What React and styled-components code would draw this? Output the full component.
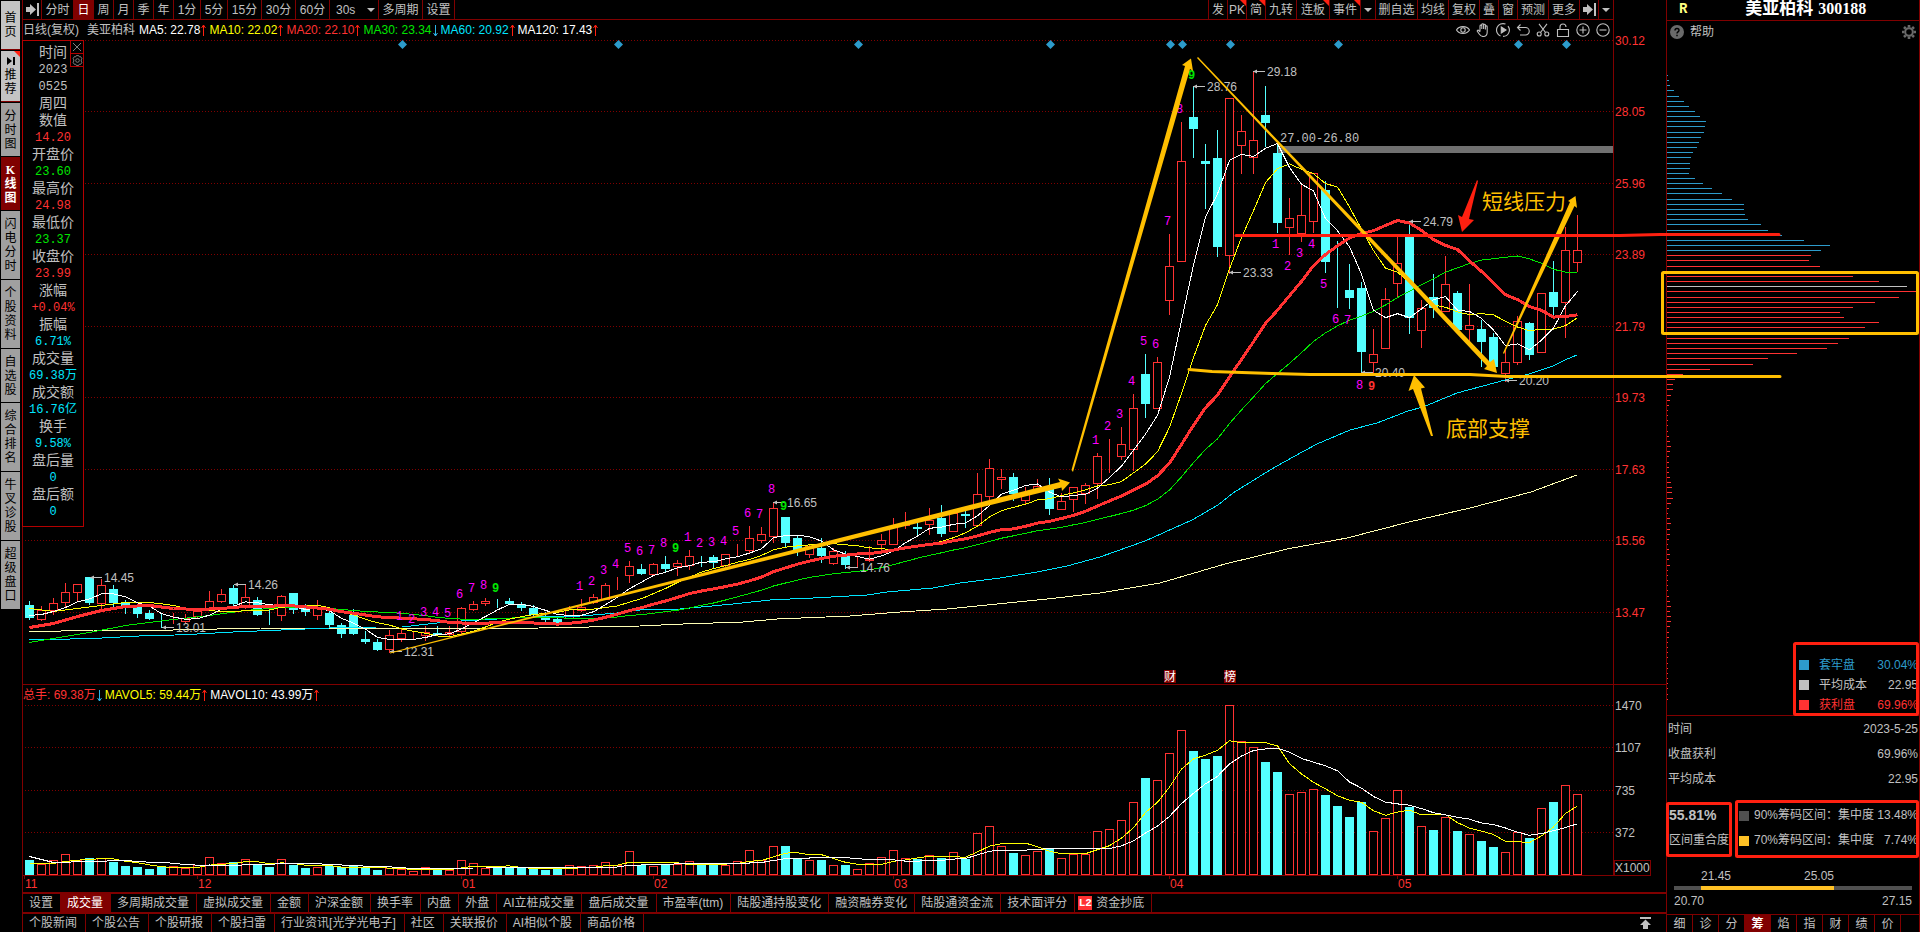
import React from "react";
import styled, { createGlobalStyle, css } from "styled-components";

const C = {
  line: "#800000",
  frame: "#b40000",
  text: "#c0c0c0",
  red: "#ff3232",
  green: "#00e600",
  cyan: "#54ffff",
  aqua: "#00e6ff",
  yellow: "#ffff00",
  blue: "#2d9bcb",
  gold: "#ffbf00",
  mark: "#ff2010",
};

const SANS = `"Liberation Sans", "Noto Sans CJK SC", sans-serif`;
const MONO = `"Liberation Mono", "Noto Sans CJK SC", monospace`;
const SERIF = `"Liberation Serif", "Noto Sans CJK SC", serif`;

const GlobalStyle = createGlobalStyle`
  * { box-sizing: border-box; }
  body {
    margin: 0;
    background: #000;
    color: ${C.text};
    font: 12px/14px ${SANS};
  }
  button, select {
    font: inherit;
    color: inherit;
    background: none;
    border: 0;
    padding: 0;
    margin: 0;
    white-space: nowrap;
  }
  svg { display: block; }
`;

/* ---------- data ---------- */

// high, body top, body bottom, low, volume top, 1 = rising
const CANDLES = [
  [601, 605, 618, 619, 860, 0], [606, 610, 619, 620, 864, 1], [598, 603, 610, 614, 860, 1],
  [583, 592, 602, 606, 854, 1], [584, 584, 592, 601, 860, 1], [577, 577, 603, 604, 858, 0],
  [579, 585, 603, 608, 858, 1], [585, 589, 603, 606, 862, 0], [600, 602, 607, 613, 866, 0],
  [604, 607, 614, 617, 867, 0], [610, 613, 619, 619, 869, 0], [614, 623, 623, 627, 867, 0],
  [613, 620, 620, 623, 866, 1], [614, 618, 621, 622, 868, 1], [609, 611, 616, 617, 865, 1],
  [591, 601, 609, 610, 857, 1], [589, 594, 601, 602, 863, 1], [585, 588, 604, 605, 862, 0],
  [585, 597, 607, 608, 859, 1], [597, 600, 615, 615, 865, 0], [605, 612, 612, 624, 867, 0],
  [595, 596, 615, 620, 859, 1], [593, 593, 610, 613, 865, 0], [604, 608, 612, 615, 868, 0],
  [600, 608, 615, 619, 867, 1], [611, 613, 625, 626, 866, 0], [623, 625, 634, 637, 867, 0],
  [609, 615, 634, 634, 865, 0], [631, 639, 642, 643, 868, 0], [639, 642, 650, 650, 870, 0],
  [630, 635, 649, 652, 868, 1], [629, 633, 638, 641, 869, 1], [632, 635, 635, 638, 871, 1],
  [626, 632, 635, 640, 867, 1], [626, 633, 635, 635, 869, 0], [626, 632, 634, 636, 870, 1],
  [607, 608, 631, 633, 860, 1], [601, 604, 609, 610, 863, 1], [598, 601, 603, 605, 868, 1],
  [599, 602, 602, 607, 868, 0], [598, 601, 604, 604, 868, 0], [602, 604, 608, 610, 868, 0],
  [605, 608, 615, 616, 868, 0], [612, 617, 620, 622, 870, 0], [617, 619, 623, 624, 868, 0],
  [606, 609, 618, 618, 865, 1], [599, 607, 610, 611, 866, 1], [594, 597, 602, 603, 865, 1],
  [583, 585, 599, 599, 862, 1], [577, 586, 586, 589, 865, 1], [561, 566, 575, 582, 851, 1],
  [564, 569, 574, 574, 865, 0], [563, 564, 574, 574, 866, 1], [556, 564, 569, 571, 865, 0],
  [560, 563, 566, 575, 864, 1], [550, 556, 565, 569, 861, 1], [556, 556, 556, 566, 864, 0],
  [555, 557, 563, 568, 864, 0], [554, 554, 565, 566, 865, 1], [544, 552, 552, 556, 861, 1],
  [526, 538, 550, 553, 850, 1], [527, 534, 540, 542, 860, 1], [503, 508, 536, 542, 846, 1],
  [517, 517, 543, 547, 846, 0], [536, 538, 550, 555, 859, 0], [545, 546, 554, 557, 860, 1],
  [538, 548, 556, 562, 860, 0], [548, 551, 563, 564, 865, 1], [551, 556, 565, 568, 865, 0],
  [557, 562, 562, 566, 869, 1], [546, 559, 560, 561, 863, 1], [534, 540, 544, 551, 857, 1],
  [518, 527, 544, 544, 850, 1], [512, 523, 525, 528, 858, 1], [523, 527, 529, 536, 859, 0],
  [508, 520, 524, 534, 855, 1], [505, 518, 534, 536, 858, 0], [512, 513, 531, 531, 852, 1],
  [510, 514, 516, 527, 859, 0], [473, 494, 525, 525, 833, 1], [459, 468, 496, 500, 826, 1],
  [469, 477, 479, 488, 846, 1], [473, 477, 494, 500, 853, 0], [487, 492, 500, 503, 855, 1],
  [479, 486, 490, 492, 851, 1], [478, 489, 509, 514, 849, 0], [493, 501, 509, 509, 858, 1],
  [487, 487, 499, 511, 854, 1], [483, 485, 493, 503, 854, 1], [453, 456, 483, 498, 831, 1],
  [439, 456, 456, 472, 829, 1], [427, 444, 456, 459, 820, 1], [394, 408, 449, 470, 802, 1],
  [354, 374, 404, 417, 778, 0], [357, 362, 408, 408, 780, 1], [234, 266, 300, 314, 753, 1],
  [122, 161, 261, 261, 730, 1], [86, 117, 129, 157, 751, 0], [144, 161, 164, 208, 759, 0],
  [130, 158, 247, 256, 756, 0], [98, 98, 255, 273, 705, 1], [115, 131, 145, 173, 741, 1],
  [71, 140, 157, 173, 747, 1], [86, 115, 123, 146, 762, 0], [145, 153, 223, 232, 772, 0],
  [198, 218, 227, 254, 794, 1], [185, 215, 233, 241, 792, 1], [173, 173, 221, 232, 789, 1],
  [181, 190, 262, 272, 795, 0], [241, 283, 283, 307, 806, 0], [264, 290, 298, 308, 817, 0],
  [282, 288, 352, 373, 802, 0], [329, 354, 362, 373, 831, 1], [288, 299, 348, 348, 818, 1],
  [237, 263, 283, 297, 790, 1], [225, 237, 318, 333, 807, 0], [300, 308, 330, 347, 826, 1],
  [274, 297, 308, 317, 830, 0], [256, 284, 311, 311, 817, 1], [291, 293, 330, 330, 831, 0],
  [284, 325, 329, 340, 834, 1], [320, 329, 342, 366, 841, 0], [333, 337, 367, 367, 847, 0],
  [350, 362, 373, 381, 852, 1], [316, 321, 362, 364, 832, 1], [322, 323, 355, 359, 838, 0],
  [293, 293, 352, 352, 808, 1], [261, 292, 307, 314, 802, 0], [227, 250, 302, 337, 785, 1],
  [215, 250, 262, 271, 794, 1],
];

const cx = (i) => 29 + 12 * i;
const VOL_BASE = 875;

// moving average over candles; `head` covers the days before the period fills up
function average(values, period, head) {
  const out = head.map(([i, y]) => [cx(i), y]);
  for (let i = period - 1; i < values.length; i += 1) {
    let sum = 0;
    for (let k = 0; k < period; k += 1) sum += values[i - k];
    out.push([cx(i), Math.round((sum / period) * 10) / 10]);
  }
  return out.map(([x, y]) => `${x + 0.5},${y + 0.5}`).join(" ");
}

const closes = CANDLES.map((c) => (c[5] ? c[1] : c[2]));
const volumes = CANDLES.map((c) => c[4]);

const MA5 = average(closes, 5, [[0, 615], [1, 614], [2, 611], [3, 607]]);
const MA10 = average(closes, 10, [[0, 608], [2, 611], [4, 608], [6, 605], [8, 602]]);
const MA20 = average(closes, 20, [
  [0, 627], [2, 623], [4, 616], [6, 610], [8, 606], [10, 605], [12, 608], [14, 609], [16, 608], [18, 606],
]);
const MA30 = average(closes, 30, [
  [0, 642], [2, 638], [5, 632], [8, 625], [12, 619], [15, 615], [18, 610], [21, 607], [24, 607], [26, 609], [28, 611],
]);
const MA60 =
  "29,639 70,639 102,638 139,636 175,635 197,634 233,632 281,630 329,628 377,627 402,627 437,623 461,621 497,619 533,617 581,616 617,613 640,610 680,609 733,604 770,600 790,599 813,598 867,595 887,592 933,588 960,583 1000,578 1037,572 1067,566 1100,557 1145,541 1192,520 1218,505 1233,493 1270,470 1293,457 1317,444 1350,430 1377,423 1408,411 1423,407 1457,393 1483,386 1505,380 1529,374 1553,366 1565,360 1577,355";
const MA120 =
  "29,632 94,630 173,630 261,628 353,628 465,629 539,628 640,626 683,624 743,622 777,619 850,616 900,612 947,609 1007,603 1047,599 1100,593 1160,583 1225,564 1287,549 1347,538 1409,522 1470,508 1531,492 1577,475";

const VMA5 = average(volumes, 5, [[0, 863], [2, 863], [3, 861]]);
const VMA10 = average(volumes, 10, [[0, 856], [2, 862], [5, 861], [8, 860]]);

const PRICES = [
  ["30.12", 40], ["28.05", 111], ["25.96", 183], ["23.89", 254], ["21.79", 326],
  ["19.73", 397], ["17.63", 469], ["15.56", 540], ["13.47", 612],
];
const VOLUMES = [["1470", 705], ["1107", 747], ["735", 790], ["372", 832]];
const MONTHS = [["11", 24], ["12", 197], ["01", 461], ["02", 653], ["03", 893], ["04", 1169], ["05", 1397]];
const DIAMONDS = [402, 618, 858, 1050, 1170, 1182, 1230, 1338, 1518, 1566];

const TAGS = [
  ["14.45", 90, 577], ["14.26", 234, 584], ["13.01", 162, 627], ["12.31", 390, 651],
  ["16.65", 773, 502], ["14.76", 846, 567], ["28.76", 1193, 86], ["29.18", 1253, 71],
  ["23.33", 1229, 272], ["24.79", 1409, 221], ["20.40", 1361, 372], ["20.20", 1505, 380],
];

// nine-count runs: first candle, then the height of each digit
const COUNTS = [
  [31, [616, 619, 612, 612, 613, 594, 588, 585, 588]],
  [46, [586, 581, 570, 564, 548, 551, 550, 543, 548]],
  [55, [537, 543, 542, 541, 531, 513, 514, 489, 506]],
  [89, [440, 426, 414, 381, 341, 344, 221, 109, 75]],
  [104, [244, 266, 253, 244, 284, 319, 320, 385, 386]],
];

const CHIPS = [
  1, 2, 3, 7, 12, 17, 22, 28, 33, 39, 38, 37, 34, 32, 30, 26, 24, 23, 23, 22, 28, 36, 45, 55, 65, 77, 77,
  78, 81, 94, 101, 115, 137, 163, 154, 144, 142, 153, 170, 186, 212, 240, 249, 232, 208, 186, 173, 177,
  212, 198, 190, 182, 171, 160, 130, 101, 86, 43, 16, 8, 6, 6, 4, 3, 2, 1, 1, 1, 1, 1, 2, 3, 4, 3, 2, 2,
  2, 2, 3, 4, 5, 5, 6, 4, 2, 1, 3, 4, 3, 3, 2, 1, 2, 3, 2, 3, 1, 1, 1, 1, 1, 2, 3, 4, 3, 4, 4, 3, 2, 2,
  1, 1, 1, 1, 1, 1, 1, 1, 1, 1, 1, 1,
];

const chipColor = (k) => {
  if (k < 35) return C.blue;
  return k === 41 ? C.text : C.red;
};

/* ---------- layout ---------- */

const Page = styled.div`
  position: relative;
  display: grid;
  grid-template-columns: 22px minmax(0, 1fr) 254px;
  min-height: 100vh;
  overflow: hidden;
`;

const Sidebar = styled.nav`
  display: flex;
  flex-direction: column;
  gap: 1px;
  padding: 1px 2px 0 1px;
`;

const SideTab = styled.button`
  position: relative;
  display: flex;
  flex-direction: column;
  align-items: center;
  justify-content: center;
  height: ${(p) => p.$height}px;
  background: ${(p) => (p.$light ? "#c4c4c4" : "#a0a0a0")};
  color: #000;
  ${(p) => p.$light && css`
    margin-bottom: 1px;
    box-shadow: 0 1px 0 ${C.line};
  `}
  ${(p) => p.$active && css`
    background: ${C.line};
    color: #fff;
    font-family: ${SERIF};
    font-weight: 700;
  `}

  svg {
    margin-bottom: 3px;
  }
  span {
    width: 12px;
    white-space: normal;
    word-break: break-all;
  }
`;

const Corner = styled.i`
  position: absolute;
  top: 0;
  right: 0;
  width: 6px;
  height: 6px;
  background: ${C.mark};
  clip-path: polygon(0 0, 100% 0, 100% 100%);
`;

const Main = styled.main`
  display: flex;
  flex-direction: column;
  border-left: 1px solid ${C.line};
`;

const Head = styled.header`
  margin-right: 52px;
  border-right: 1px solid ${C.line};
`;

const Toolbar = styled.div`
  display: flex;
  height: 20px;
  border-bottom: 1px solid ${C.line};
`;

const Group = styled.div`
  display: flex;
  margin-left: ${(p) => (p.$end ? "auto" : "0")};
`;

const ToolButton = styled.button`
  position: relative;
  display: flex;
  align-items: center;
  justify-content: center;
  width: ${(p) => p.$width}px;
  height: 19px;
  border-left: 1px solid ${(p) => (p.$plain ? "transparent" : C.line)};
  background: ${(p) => (p.$active ? C.line : "none")};
  color: ${(p) => (p.$active ? "#fff" : C.text)};
`;

const SelectBox = styled.label`
  display: flex;
  align-items: center;
  justify-content: space-between;
  width: 49px;
  height: 19px;
  padding: 0 3px 0 6px;
  border-left: 1px solid ${C.line};

  select {
    appearance: none;
    width: 24px;
  }
`;

const Readout = styled.div`
  display: flex;
  align-items: center;
  height: 20px;
`;

const Reading = styled.span`
  display: flex;
  align-items: center;
  gap: 1px;
  margin-right: ${(p) => p.$gap || 2}px;
  color: ${(p) => p.$color || C.text};
  white-space: nowrap;
`;

const IconRow = styled.div`
  display: flex;
  gap: 6px;
  margin-left: auto;
  padding-right: 3px;

  button {
    width: 14px;
    height: 14px;
  }
`;

const ChartArea = styled.section`
  position: relative;
`;

const ChartSvg = styled.svg`
  width: 100%;
  height: auto;
  overflow: visible;

  text {
    font: 12px ${SANS};
    fill: ${C.text};
  }
  .red text {
    fill: ${C.red};
  }
  text.mono {
    font-family: ${MONO};
  }
  text.white {
    fill: #fff;
  }
`;

const Digit = styled.text`
  && {
    font-family: ${MONO};
    font-weight: ${(p) => (p.$last ? 700 : 400)};
    fill: ${(p) => p.$color};
  }
`;

const DayWindow = styled.aside`
  position: absolute;
  top: 0;
  left: -1px;
  width: 62px;
  height: 487px;
  padding-top: 4px;
  border: 1px solid ${C.frame};
  background: #000;
  text-align: center;
`;

const DayRow = styled.div`
  height: 17px;
  line-height: 17px;
  font-size: ${(p) => (p.$number ? 12 : 14)}px;
  font-family: ${MONO};
  color: ${(p) => p.$color || C.text};
  white-space: nowrap;
`;

const DayButtons = styled.div`
  position: absolute;
  top: -1px;
  right: -1px;

  button {
    display: flex;
    align-items: center;
    justify-content: center;
    width: 14px;
    height: 14px;
    margin-bottom: -1px;
    border: 1px solid ${C.frame};
    background: #000;
  }
`;

const VolumeHead = styled.div`
  position: absolute;
  top: 76%;
  left: 0;
  display: flex;
`;

const TabRow = styled.nav`
  display: flex;
  height: 20px;
  border-top: 2px solid ${C.line};
`;

const Tab = styled.button`
  display: flex;
  align-items: center;
  gap: 4px;
  height: 18px;
  padding: 0 ${(p) => (p.$wide ? 8 : 7)}px 0 6px;
  border-right: 1px solid ${C.line};
  background: ${(p) => (p.$active ? C.line : "none")};
  color: ${(p) => (p.$active ? "#fff" : C.text)};
`;

const LevelBadge = styled.b`
  width: 14px;
  margin-left: -3px;
  background: ${C.red};
  color: #fff;
  font: 700 11px/14px ${MONO};
`;

const TopButton = styled.button`
  margin-left: auto;
  padding-right: 14px;
`;

const Side = styled.aside`
  display: flex;
  flex-direction: column;
  border-left: 1px solid ${C.line};
  border-right: 1px solid ${C.line};
`;

const SideTitle = styled.h1`
  display: flex;
  align-items: center;
  justify-content: center;
  gap: 5px;
  height: 21px;
  margin: 0;
  padding: 2px 0 4px 18px;
  border-bottom: 1px solid ${C.line};
  color: #fff;
  font: 700 16px/16px ${SERIF};

  i {
    margin: 0 auto 0 -6px;
    color: #ffff80;
    font: 700 14px/14px ${MONO};
  }
  span {
    font-size: 17px;
  }
  span:last-child {
    margin-right: auto;
    font-size: 16px;
  }
`;

const HelpBar = styled.div`
  display: flex;
  align-items: center;
  justify-content: space-between;
  height: 21px;
  padding: 0 3px;

  button {
    display: flex;
    align-items: center;
    gap: 6px;
  }
`;

const ChipArea = styled.section`
  position: relative;

  > svg {
    width: 100%;
    height: auto;
  }
`;

const ChipLegend = styled.div`
  position: absolute;
  right: 1px;
  bottom: 0;
  width: 119px;
`;

const LegendRow = styled.div`
  display: flex;
  align-items: center;
  height: 20px;
  color: ${(p) => p.$color};

  &::before {
    content: "";
    width: 10px;
    height: 10px;
    margin-right: 10px;
    background: ${(p) => p.$color};
  }
  span:last-child {
    margin-left: auto;
  }
`;

const Stats = styled.dl`
  margin: 0;
  border-top: 1px solid ${C.line};

  div {
    display: flex;
    align-items: center;
    justify-content: space-between;
    height: 25px;
    padding: 0 1px;
  }
  dd {
    margin: 0;
  }
`;

const Overlap = styled.section`
  display: grid;
  grid-template-columns: 72px 1fr;
  margin-top: 12px;
  line-height: 25px;

  > b {
    padding-left: 2px;
    font-size: 14px;
  }
  > span {
    padding-left: 2px;
  }
`;

const Concentration = styled.div`
  display: flex;
  align-items: center;
  height: 25px;
  padding-right: 1px;
  white-space: nowrap;

  &::before {
    content: "";
    width: 10px;
    height: 10px;
    margin-right: 5px;
    background: ${(p) => p.$color};
  }
  span:last-child {
    margin-left: auto;
  }
`;

const Range = styled.section`
  margin: 13px 7px 0;
`;

const RangeRow = styled.div`
  display: grid;
  grid-template-columns: 27fr 133fr 78fr;
  line-height: 20px;

  div {
    grid-column: 2;
    display: flex;
    justify-content: space-between;
  }
`;

const RangeBar = styled(RangeRow)`
  height: 4px;
  background: #505050;

  div {
    background: #ffc125;
  }
`;

const RangeEnds = styled.div`
  display: flex;
  justify-content: space-between;
  line-height: 22px;
`;

const ModeTabs = styled.nav`
  display: flex;
  height: 18px;
  margin-top: auto;
  border-top: 1px solid ${C.line};
`;

const ModeTab = styled.button`
  width: 26px;
  height: 17px;
  border-right: 1px solid ${C.line};
  background: ${(p) => (p.$active ? C.line : "none")};
  color: ${(p) => (p.$active ? "#fff" : C.text)};
  font-weight: ${(p) => (p.$active ? 700 : 400)};
`;

const Overlay = styled.svg`
  position: absolute;
  top: 0;
  left: 0;
  width: 100%;
  height: auto;
  pointer-events: none;

  text {
    font: 21px ${SANS};
    fill: ${C.gold};
  }
`;

/* ---------- icons ---------- */

const Trend = ({ down }) => (
  <svg width="6" height="14" viewBox="0 0 6 14" fill="none" stroke={down ? "#2db4e6" : "#ff2010"}>
    {down ? <path d="M2.500 2v11M.5 10l2 3 2-3" /> : <path d="M2.500 13V2M.5 5l2-3 2 3" />}
  </svg>
);

const Caret = () => (
  <svg width="8" height="4" viewBox="0 0 8 4">
    <path d="M0 0h8L4 4z" fill={C.text} />
  </svg>
);

const ToEnd = () => (
  <svg width="13" height="13" viewBox="0 0 13 13" fill={C.text}>
    <path d="M0 4h4V1l6 5.500-6 5.500V9H0zM11 0h2v13h-2z" />
  </svg>
);

const Tool = ({ label, children }) => (
  <button type="button" aria-label={label}>
    <svg width="14" height="14" viewBox="0 0 14 14" fill="none" stroke={C.text} strokeWidth="1.1">
      {children}
    </svg>
  </button>
);

const Gear = ({ size, color, width = 2 }) => (
  <svg width={size} height={size} viewBox="0 0 14 14" fill="none" stroke={color}>
    <circle cx="7" cy="7" r="3.800" strokeWidth={width} />
    <path
      strokeWidth={width + 0.6}
      d="M7 0v2.400M7 11.600V14M0 7h2.400M11.600 7H14M2 2l1.700 1.700M10.300 10.300L12 12M12 2l-1.700 1.700M3.700 10.300L2 12"
    />
  </svg>
);

const RingGear = () => (
  <svg width="11" height="11" viewBox="0 0 11 11" fill="none" stroke="#808080">
    <path d="M4.300.6h2.400l.6 1.200 1.400-.1 1.200 2-.7 1.200v1.200l.7 1.200-1.200 2-1.400-.1-.6 1.200H4.300l-.6-1.200-1.400.1-1.200-2 .7-1.200V4.900l-.7-1.200 1.200-2 1.400.1z" />
    <circle cx="5.500" cy="5.500" r="1.800" />
  </svg>
);

const Tools = () => (
  <IconRow>
    <Tool label="显示">
      <path d="M.5 7C3 2.500 11 2.500 13.500 7 11 11.500 3 11.500 .5 7z" />
      <circle cx="7" cy="7" r="2.200" />
    </Tool>
    <Tool label="拖动">
      <path d="M4 8.500V3a.9.9 0 011.800 0v3V1.600a.9.9 0 011.800 0V6 2.200a.9.9 0 011.800 0V6.500 3.800a.9.9 0 011.800 0V9c0 3-1.500 4.500-4 4.500-2.200 0-3-1-4-2.500L1.300 8.300c-.3-1 .8-1.500 1.500-.8L4 9" />
    </Tool>
    <Tool label="回放">
      <path d="M9.500 1.100A6.300 6.300 0 104.500 13M7 13.400A6.300 6.300 0 0012 3.200" />
      <path d="M5.300 4v6l4.700-3z" fill={C.text} />
    </Tool>
    <Tool label="撤销">
      <path d="M4.500 1.500L1.500 4.500l3 3M1.500 4.500h8a3.500 3.500 0 010 7.500H4" />
    </Tool>
    <Tool label="剪切">
      <circle cx="3.200" cy="11" r="2" />
      <circle cx="10.800" cy="11" r="2" />
      <path d="M4.500 9.500L11 .8M9.500 9.500L3 .8" />
    </Tool>
    <Tool label="锁定">
      <path d="M1.500 6.500h11v7h-11zM4 6.500V4a3 3 0 016 0" />
    </Tool>
    <Tool label="放大">
      <circle cx="7" cy="7" r="6.200" />
      <path d="M7 3.500v7M3.500 7h7" />
    </Tool>
    <Tool label="缩小">
      <circle cx="7" cy="7" r="6.200" />
      <path d="M3.500 7h7" />
    </Tool>
  </IconRow>
);

/* ---------- parts ---------- */

const SIDE_TABS = [
  ["分时图", 53], ["K线图", 53, true], ["闪电分时", 68], ["个股资料", 68], ["自选股", 53],
  ["综合排名", 68], ["牛叉诊股", 68], ["超级盘口", 68],
];

const PERIODS = [
  ["分时", 32], ["日", 20, true], ["周", 20], ["月", 20], ["季", 20], ["年", 20],
  ["1分", 27], ["5分", 27], ["15分", 34], ["30分", 34], ["60分", 34],
];

const ACTIONS = [
  ["发", 19], ["PK", 19, true], ["简", 19, true], ["九转", 31], ["连板", 33, true], ["事件", 31, true],
  [<Caret key="c" />, 15], ["删自选", 42], ["均线", 31], ["复权", 31], ["叠", 19], ["窗", 19],
  ["预测", 31], ["更多", 31], [<ToEnd key="e" />, 19], [<Caret key="d" />, 15],
];

const READINGS = [
  ["MA5: 22.78", "#fff"], ["MA10: 22.02", C.yellow], ["MA20: 22.10", C.red],
  ["MA30: 23.34", C.green, true], ["MA60: 20.92", C.aqua], ["MA120: 17.43", "#fff"],
];

const DAY = [
  ["时间"], ["2023"], ["0525"], ["周四"], ["数值"], ["14.20", C.red], ["开盘价"], ["23.60", C.green],
  ["最高价"], ["24.98", C.red], ["最低价"], ["23.37", C.green], ["收盘价"], ["23.99", C.red],
  ["涨幅"], ["+0.04%", C.red], ["振幅"], ["6.71%", C.aqua], ["成交量"], ["69.38万", C.aqua],
  ["成交额"], ["16.76亿", C.aqua], ["换手"], ["9.58%", C.aqua], ["盘后量"], ["0", C.aqua],
  ["盘后额"], ["0", C.aqua],
];

const INDICATORS = [
  "设置", "成交量", "多周期成交量", "虚拟成交量", "金额", "沪深金额", "换手率", "内盘", "外盘",
  "AI立桩成交量", "盘后成交量", "市盈率(ttm)", "陆股通持股变化", "融资融券变化", "陆股通资金流", "技术面评分",
];

const NEWS = [
  "个股新闻", "个股公告", "个股研报", "个股扫雷", "行业资讯[光学光电子]", "社区", "关联报价", "AI相似个股", "商品价格",
];

const MODES = ["细", "诊", "分", "筹", "焰", "指", "财", "绩", "价"];

const countColor = (n, run) => {
  if (n < 8) return "#ff00ff";
  return run === 4 ? C.red : C.green;
};

const Candle = ({ i, candle: [high, top, bottom, low, vol, up] }) => {
  const x = cx(i);
  const color = up ? C.red : C.cyan;
  return (
    <g stroke={color} fill={up ? "#000" : C.cyan}>
      <path d={`M${x + 0.5} ${high}V${low + 1}`} />
      <rect x={x - 3.5} y={top + 0.5} width="8" height={Math.max(bottom - top - (up ? 0 : 1), 0)} />
      <rect x={x - 3.5} y={vol + 0.5} width="8" height={VOL_BASE - vol - 1} />
    </g>
  );
};

const Chart = () => (
  <ChartSvg viewBox="23 40 1643 852" role="img" aria-label="日K线">
    <g stroke={C.line} strokeDasharray="1 2" shapeRendering="crispEdges">
      {[...PRICES, ...VOLUMES].map(([label, y]) => (
        <path key={label} d={`M25 ${y + 0.5}H1613`} />
      ))}
    </g>
    <g stroke={C.line} fill="none" shapeRendering="crispEdges">
      <path d="M1613.500 40V876M23 684.500H1666M23 875.500H1614" />
      {MONTHS.map(([label, x]) => (
        <path key={label} d={`M${x + 0.5} 876v3`} />
      ))}
      <rect x="1614.500" y="860.500" width="36" height="15" />
    </g>
    <g className="red">
      {PRICES.map(([label, y]) => (
        <text key={label} x="1615" y={y + 5}>{label}</text>
      ))}
      {MONTHS.map(([label, x]) => (
        <text key={label} x={x + 1} y="888">{label}</text>
      ))}
    </g>
    {VOLUMES.map(([label, y]) => (
      <text key={label} x="1615" y={y + 5}>{label}</text>
    ))}
    <text x="1615" y="872">X1000</text>

    <rect x="1277" y="146" width="336" height="7" fill="#707070" />
    <text x="1280" y="142" className="mono">27.00-26.80</text>

    {DIAMONDS.map((x) => (
      <path key={x} d={`M${x + 0.5} 40l4.500 4.500-4.500 4.500-4.500-4.500z`} fill={C.blue} />
    ))}

    <g shapeRendering="crispEdges">
      {CANDLES.map((candle, i) => (
        <Candle key={i} i={i} candle={candle} />
      ))}
    </g>

    <g fill="none" strokeLinejoin="round" shapeRendering="crispEdges">
      <polyline points={MA120} stroke="#ffffb4" />
      <polyline points={MA60} stroke={C.aqua} />
      <polyline points={MA30} stroke={C.green} />
      <polyline points={MA10} stroke={C.yellow} />
      <polyline points={MA5} stroke="#fff" />
      <polyline points={MA20} stroke={C.red} strokeWidth="3" />
      <polyline points={VMA5} stroke={C.yellow} />
      <polyline points={VMA10} stroke="#fff" />
    </g>

    {TAGS.map(([label, x, y]) => (
      <g key={label}>
        <path d={`M${x} ${y + 0.5}h12`} stroke={C.text} />
        <path d={`M${x} ${y + 0.5}l4 -2v4z`} fill={C.text} />
        <text x={x + 14} y={y + 5}>{label}</text>
      </g>
    ))}

    {COUNTS.map(([first, heights], run) =>
      heights.map((y, n) => (
        <Digit
          key={`${first}-${n}`}
          x={cx(first + n) - 5}
          y={y + 4}
          $last={n === 8}
          $color={countColor(n, run)}
        >
          {n + 1}
        </Digit>
      ))
    )}

    {[["财", 1164], ["榜", 1224]].map(([label, x]) => (
      <g key={label}>
        <rect x={x} y="670" width="12" height="13" fill={C.line} />
        <text x={x} y="681" className="white">{label}</text>
      </g>
    ))}
  </ChartSvg>
);

const Chips = () => (
  <svg viewBox="1667 42 252 673" role="img" aria-label="筹码分布" shapeRendering="crispEdges">
    {CHIPS.map((length, k) => (
      <rect
        key={k}
        x="1667"
        y={75 + Math.floor(k * 5.155 + 0.4)}
        width={length}
        height="1"
        fill={chipColor(k)}
      />
    ))}
  </svg>
);

const Drawings = () => (
  <Overlay viewBox="0 0 1920 932" aria-hidden="true">
    <g fill={C.gold}>
      <path d="M390 652.500L1060 482 1058 478.500 1070 482.500 1062 491 1061.500 487.500 390 653.500z" />
      <path d="M1071.500 470L1185 66 1182 65 1191 58.500 1193 71 1190 69 1073 472z" />
      <path d="M1198 57L1490 362 1494 359 1497 373 1484 369 1487 366 1197 58z" />
      <path d="M1503 353L1570 202 1568 201 1575.500 196 1577 208 1574.500 206 1504 354z" />
      <path d="M1414 375L1425 387.500 1421 388.500 1433 436 1431 436 1413 389 1408.500 391z" />
    </g>
    <path d="M1477 180L1478 181 1469 219 1474 220 1462 232 1458 215 1462 217z" fill={C.mark} />
    <g fill="none" strokeWidth="3" strokeLinejoin="round" strokeLinecap="round">
      <path d="M1236 235.500H1620L1660 234.500H1779" stroke={C.mark} />
      <path d="M1189 369.500L1212 371.500 1273 373.500 1310 374.500H1470L1507 376.500H1780" stroke={C.gold} />
      <rect x="1662.500" y="272.500" width="255" height="61" rx="1" stroke={C.gold} />
      <g stroke={C.mark}>
        <rect x="1794.500" y="643.500" width="123" height="71" rx="1" />
        <rect x="1667.500" y="803.500" width="63" height="52" rx="1" />
        <rect x="1736.500" y="801.500" width="181" height="55" rx="1" />
      </g>
    </g>
    <text x="1482" y="209">短线压力</text>
    <text x="1446" y="436">底部支撑</text>
  </Overlay>
);

export default function App() {
  return (
    <Page>
      <GlobalStyle />
      <Sidebar>
        <SideTab type="button" $light $height={48}>
          <span>首页</span>
        </SideTab>
        <SideTab type="button" $light $height={50}>
          <Corner />
          <svg width="8" height="8" viewBox="0 0 8 8">
            <path d="M0 0l5 4-5 4zM6 0h2v8H6z" />
          </svg>
          <span>推荐</span>
        </SideTab>
        {SIDE_TABS.map(([label, height, active]) => (
          <SideTab key={label} type="button" $height={height} $active={active}>
            <span>{label}</span>
          </SideTab>
        ))}
      </Sidebar>

      <Main>
        <Head>
          <Toolbar>
            <ToolButton type="button" $width={18} $plain aria-label="展开"><ToEnd /></ToolButton>
            <Group>
              {PERIODS.map(([label, width, active]) => (
                <ToolButton key={label} type="button" $width={width} $active={active}>{label}</ToolButton>
              ))}
              <SelectBox>
                <select aria-label="秒周期" defaultValue="30s">
                  <option>30s</option>
                </select>
                <Caret />
              </SelectBox>
              <ToolButton type="button" $width={44}>多周期</ToolButton>
              <ToolButton type="button" $width={32}>设置</ToolButton>
              <ToolButton as="i" $width={1} />
            </Group>
            <Group $end>
              {ACTIONS.map(([label, width, hot], i) => (
                <ToolButton key={i} type="button" $width={width}>
                  {label}
                  {hot && <Corner />}
                </ToolButton>
              ))}
            </Group>
          </Toolbar>
          <Readout>
            <Reading $gap={8}>日线(复权)</Reading>
            <Reading $gap={4}>美亚柏科</Reading>
            {READINGS.map(([label, color, down]) => (
              <Reading key={label} $color={color}>{label}<Trend down={down} /></Reading>
            ))}
            <Tools />
          </Readout>
        </Head>

        <ChartArea>
          <Chart />
          <DayWindow>
            {DAY.map(([label, color], i) => (
              <DayRow key={i} $color={color} $number={/\d/.test(label)}>{label}</DayRow>
            ))}
            <DayButtons>
              <button type="button" aria-label="关闭">
                <svg width="10" height="10" viewBox="0 0 10 10" stroke="#808080">
                  <path d="M1 1l8 8M9 1L1 9" />
                </svg>
              </button>
              <button type="button" aria-label="窗口设置"><RingGear /></button>
            </DayButtons>
          </DayWindow>
          <VolumeHead>
            <Reading $color={C.red}>总手: 69.38万<Trend down /></Reading>
            <Reading $color={C.yellow}>MAVOL5: 59.44万<Trend /></Reading>
            <Reading $color="#fff">MAVOL10: 43.99万<Trend /></Reading>
          </VolumeHead>
        </ChartArea>

        <TabRow>
          {INDICATORS.map((label) => (
            <Tab key={label} type="button" $active={label === "成交量"}>{label}</Tab>
          ))}
          <Tab type="button"><LevelBadge>L2</LevelBadge>资金抄底</Tab>
        </TabRow>
        <TabRow>
          {NEWS.map((label) => (
            <Tab key={label} type="button" $wide>{label}</Tab>
          ))}
          <TopButton type="button" aria-label="置顶">
            <svg width="13" height="12" viewBox="0 0 13 12" fill={C.text}>
              <path d="M1 0h11v2H1zM6.500 2.500L12 8H9v4H4V8H1z" />
            </svg>
          </TopButton>
        </TabRow>
      </Main>

      <Side>
        <SideTitle>
          <i>R</i>
          <span>美亚柏科</span>
          <span>300188</span>
        </SideTitle>
        <HelpBar>
          <button type="button">
            <svg width="14" height="14" viewBox="0 0 14 14" fill="none">
              <circle cx="7" cy="7" r="7" fill="#6a6a6a" />
              <path d="M5 5.500C5 2.800 9 2.800 9 5.300 9 7 7 6.800 7 8.500M7 9.800v1.400" stroke="#000" strokeWidth="1.400" />
            </svg>
            帮助
          </button>
          <button type="button" aria-label="设置"><Gear size={14} color="#6a6a6a" /></button>
        </HelpBar>
        <ChipArea>
          <Chips />
          <ChipLegend>
            <LegendRow $color={C.blue}><span>套牢盘</span><span>30.04%</span></LegendRow>
            <LegendRow $color={C.text}><span>平均成本</span><span>22.95</span></LegendRow>
            <LegendRow $color={C.red}><span>获利盘</span><span>69.96%</span></LegendRow>
          </ChipLegend>
        </ChipArea>
        <Stats>
          <div><dt>时间</dt><dd>2023-5-25</dd></div>
          <div><dt>收盘获利</dt><dd>69.96%</dd></div>
          <div><dt>平均成本</dt><dd>22.95</dd></div>
        </Stats>
        <Overlap>
          <b>55.81%</b>
          <Concentration $color="#505050"><span>90%筹码区间：集中度</span><span>13.48%</span></Concentration>
          <span>区间重合度</span>
          <Concentration $color="#ffc125"><span>70%筹码区间：集中度</span><span>7.74%</span></Concentration>
        </Overlap>
        <Range>
          <RangeRow>
            <div><span>21.45</span><span>25.05</span></div>
          </RangeRow>
          <RangeBar><div /></RangeBar>
          <RangeEnds><span>20.70</span><span>27.15</span></RangeEnds>
        </Range>
        <ModeTabs>
          {MODES.map((label) => (
            <ModeTab key={label} type="button" $active={label === "筹"}>{label}</ModeTab>
          ))}
        </ModeTabs>
      </Side>

      <Drawings />
    </Page>
  );
}
